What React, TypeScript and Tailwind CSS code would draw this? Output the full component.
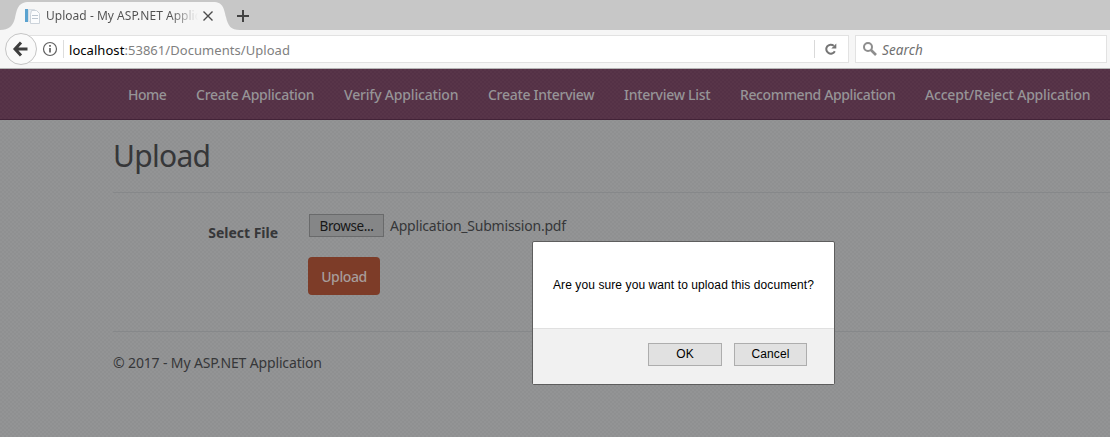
import React from "react";

const navItems = [
  { label: "Home", cls: "w-[38px] tracking-[-0.55px]" },
  { label: "Create Application", cls: "w-[118px] tracking-[-0.26px]" },
  { label: "Verify Application", cls: "w-[114px] tracking-[-0.18px]" },
  { label: "Create Interview", cls: "w-[106px] tracking-[-0.29px]" },
  { label: "Interview List", cls: "w-[86px] tracking-[-0.29px]" },
  { label: "Recommend Application", cls: "w-[155px] tracking-[-0.38px]" },
  { label: "Accept/Reject Application", cls: "w-[165px] tracking-[-0.2px]" },
];

function TabStrip() {
  return (
    <div className="relative flex h-[30px] shrink-0 bg-[#c7c7c7]">
      <svg className="absolute left-0 top-0" width="260" height="30" viewBox="0 0 260 30">
        <path d="M0 30C9 30 13 26 15 18C17 9 18 2 29 2H213C224 2 224 10 226 17C228 26 231 30 240 30Z" fill="#f6f6f6" />
        <path d="M203.500 11.500l9 9M212.500 11.500l-9 9" stroke="#4b4b4b" strokeWidth="1.400" />
        <path d="M237 16h12M243 10v12" stroke="#424242" strokeWidth="2" />
        <rect x="25" y="9" width="3" height="13" fill="#5ba3d0" />
        <path d="M28.500 9.500h6l2 2v10h-8z" fill="#e9eef3" stroke="#d8dee4" />
        <path d="M31.500 10.500h5l3 3v10h-9v-9z" fill="#fbfcfd" stroke="#ccd3da" />
        <path d="M32 15.500h6M32 18.500h6" stroke="#bcc6d0" />
      </svg>
      <div className="relative ml-[46px] w-[152px] overflow-hidden whitespace-nowrap bg-linear-to-r from-[#505050] from-82% to-transparent bg-clip-text pt-[7px] font-['Noto_Sans',sans-serif] text-[12px] leading-[18px] tracking-[0.02px] text-transparent">
        Upload - My ASP.NET Application
      </div>
    </div>
  );
}

function AddressBar() {
  return (
    <div className="relative flex h-[39px] shrink-0 items-start border-b border-[#b5b5b5] bg-[#f6f6f6] pt-[5px] font-['Noto_Sans',sans-serif] text-[13px]">
      <div className="ml-[20px] flex h-[28px] w-[829px] items-center border border-[#e2e2e2] bg-white">
        <svg className="ml-[21px]" width="16" height="16" viewBox="0 0 16 16" fill="none" stroke="#606060">
          <circle cx="8" cy="8" r="6.500" strokeWidth="1.200" />
          <path d="M8 7v4.500M8 4v1.700" strokeWidth="1.700" />
        </svg>
        <div className="ml-[5px] h-[18px] w-px bg-[#dddddd]" />
        <div className="ml-[5px] pt-[2px] leading-[20px] tracking-[0.05px] text-[#808080]">
          <span className="text-black">localhost</span>:53861/Documents/Upload
        </div>
        <div className="ml-auto h-[18px] w-px bg-[#d9d9d9]" />
        <svg className="ml-[9px] mr-[10px]" width="14" height="14" viewBox="0 0 14 14" fill="none">
          <path d="M10.800 9.200A4.500 4.500 0 1 1 9.800 3.800" stroke="#757575" strokeWidth="2" />
          <path d="M12.300 1.500v5H7.300z" fill="#757575" />
        </svg>
      </div>
      <div className="ml-[6px] flex h-[28px] w-[252px] items-center border border-[#e2e2e2] bg-white">
        <svg className="ml-[6px]" width="16" height="16" viewBox="0 0 16 16" fill="none" stroke="#8d8d8d">
          <circle cx="6" cy="6" r="4" strokeWidth="2" />
          <path d="M9 9l5 5" strokeWidth="2.600" />
        </svg>
        <span className="ml-[4px] pt-[2px] text-[13.5px] italic leading-[20px] tracking-[0.1px] text-[#707070]">Search</span>
      </div>
      <svg className="absolute left-[4px] top-[2px]" width="34" height="34" viewBox="0 0 34 34" fill="none">
        <circle cx="17" cy="17" r="15.500" fill="#fafafa" stroke="#c5c5c5" />
        <path d="M23.500 17H11.500M17 10.500L11 17l6 6.500" stroke="#3e3e3e" strokeWidth="3" />
      </svg>
    </div>
  );
}

function ConfirmDialog() {
  return (
    <div className="absolute left-[532px] top-[241px] flex h-[144px] w-[303px] flex-col rounded-[2px] border border-[#5e5e5e] bg-white font-['Liberation_Sans',Arial,sans-serif] text-[12px] text-black">
      <div className="flex h-[86px] items-center whitespace-nowrap pl-[20px] tracking-[0.09px]">
        Are you sure you want to upload this document?
      </div>
      <div className="flex flex-1 justify-end gap-[12px] border-t border-[#e0e0e0] bg-[#f1f1f1] pr-[27px] pt-[14px]">
        <button className="h-[23px] w-[74px] border border-[#adadad] bg-[#e1e1e1] pb-px">OK</button>
        <button className="h-[23px] w-[73px] border border-[#adadad] bg-[#e1e1e1] pb-px tracking-[0.1px]">Cancel</button>
      </div>
    </div>
  );
}

export default function App() {
  return (
    <div className="relative flex h-[437px] w-[1110px] flex-col overflow-hidden bg-[#919293]">
      <TabStrip />
      <AddressBar />
      <div className="flex flex-1 flex-col bg-[#919293] bg-[conic-gradient(#8f9091_25%,#939495_0_50%,#8f9091_0_75%,#939495_0)] bg-size-[4px_4px] font-['Noto_Sans',sans-serif] text-[14px] text-[#363739]">
        <nav className="flex h-[51px] shrink-0 items-center gap-[30px] whitespace-nowrap border-b border-[#432338] bg-[#563347] bg-[conic-gradient(#543146_25%,#583549_0_50%,#543146_0_75%,#583549_0)] bg-size-[4px_4px] pl-[128px] font-medium text-[#969497]">
          {navItems.map((item) => (
            <a key={item.label} className={item.cls}>{item.label}</a>
          ))}
        </nav>
        <main className="ml-[113px] flex flex-col">
          <h2 className="h-[73px] border-b border-[#86888a] pt-[18px] text-[30px] leading-[36px] tracking-[-0.7px]">Upload</h2>
          <div className="mt-[21px] flex h-[24px] items-start">
            <label className="w-[165px] pt-[9px] text-right font-bold leading-[20px] tracking-[-0.02px]">Select File</label>
            <button className="ml-[31px] h-[23px] w-[75px] border border-[#696a6b] bg-[#858687] text-[13.5px] leading-[22px] tracking-[-0.4px] text-[#171717]">Browse...</button>
            <span className="ml-[6px] pt-[2px] leading-[20px] tracking-[-0.22px]">Application_Submission.pdf</span>
          </div>
          <button className="ml-[195px] mt-[19px] h-[38px] w-[72px] rounded-[4px] bg-[#7d3c28] font-medium tracking-[-0.4px] text-[#a79d9b]">Upload</button>
          <footer className="mt-[36px] border-t border-[#86888a] pt-[21px] leading-[20px] tracking-[-0.14px]">© 2017 - My ASP.NET Application</footer>
        </main>
      </div>
      <ConfirmDialog />
    </div>
  );
}
